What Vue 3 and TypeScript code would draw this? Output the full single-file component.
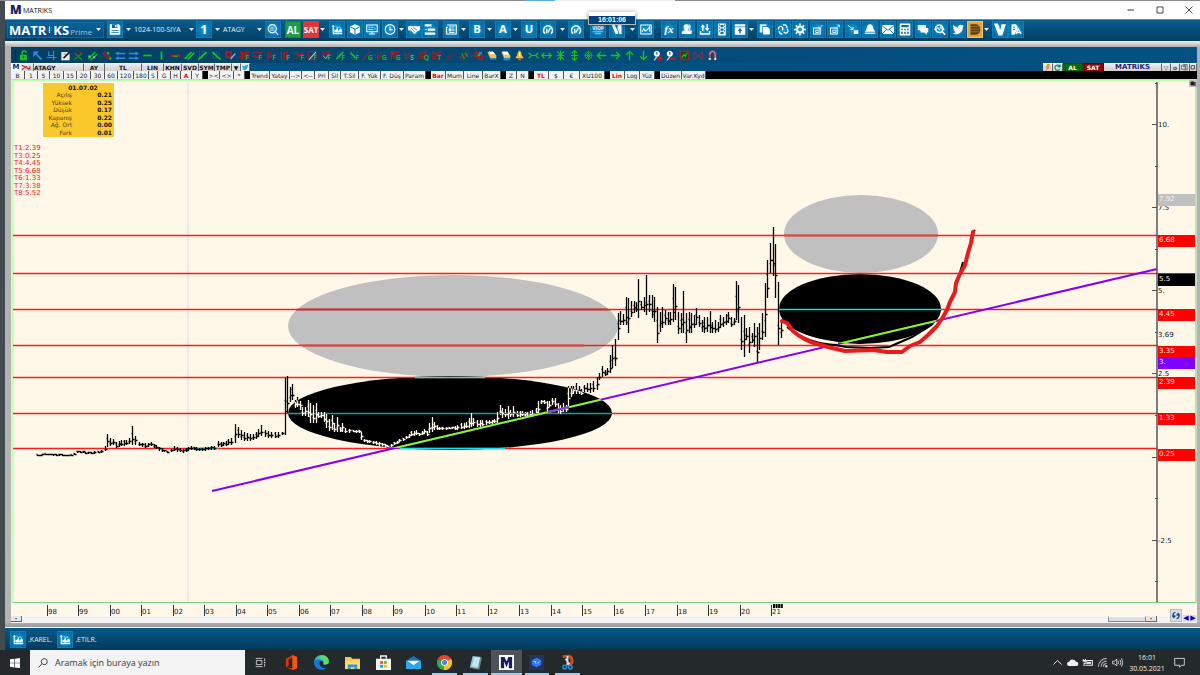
<script setup lang="ts">
import { h } from 'vue'

interface Shape {
  d?: string
  t?: string
  x?: number
  y?: number
  size?: number
  f?: string
  s?: string
  w?: number
}

const fill = (d: string, f = '#fff'): Shape => ({ d, f })
const line = (d: string, s = '#fff', w = 1.4): Shape => ({ d, s, w })
const word = (t: string, x: number, y: number, size: number, f = '#fff'): Shape => ({ t, x, y, size, f })

const Glyph = (props: { shapes: Shape[] }) =>
  h(
    'svg',
    { viewBox: '0 0 16 16', class: 'glyph', 'aria-hidden': 'true' },
    props.shapes.map((p) =>
      p.t
        ? h('text', { x: p.x, y: p.y, 'font-size': p.size, fill: p.f, 'text-anchor': 'middle', 'font-weight': 700 }, p.t)
        : h('path', { d: p.d, fill: p.f ?? 'none', stroke: p.s ?? 'none', 'stroke-width': p.w ?? 0 }),
    ),
  )
Glyph.props = ['shapes']

const bird = 'M1 12.5c2 .2 3.4-.3 4.5-1.2-1.500-.1-2.500-1-2.900-2.200h1.300C2.300 8.600 1.500 7.300 1.500 5.800l1.400.4C1.500 5 1.200 3.500 2 2c1.700 2 3.800 3.200 6.200 3.300C7.800 3.200 9.300 1.500 11.200 1.500c1 0 1.800.4 2.400 1l2-.8-1.300 1.900 1.600-.4-1.500 1.600C14.500 10 11 14.200 6.200 14.200c-2 0-3.800-.7-5.200-1.700z'
const chartIcon = [
  line('M3 2v11.500h12', '#fff', 1.5),
  fill('M4.500 12V8l2 1 2-4 1.500 5 2-3 2.500 1v4z'),
  line('M1 4h4M6 3l3 3 2-2 3 4', '#bfe6fb', 1),
]
const gauge = [line('M4 13.500A6 6 0 1 1 12 13.500', '#fff', 2), line('M6 13q1-3 0-6M8 12l3-6', '#fff', 1.800)]
const V: Record<string, Shape[]> = {
  save: [fill('M1 1h12l2 2v12H1z'), fill('M4 1h7v5H4z', '#0a6aa5'), fill('M8 2h2v3H8z'), fill('M3 9h10v1H3zM3 11.500h10v1H3z', '#0a6aa5')],
  one: [word('1', 8, 14, 17)],
  find: [line('M7 1.500a5.500 5.500 0 1 0 .1 0M11 11l4 4'), line('M4 5h6M4 7h6M4 9h6', '#cfeafa', 1)],
  chart: chartIcon,
  cube: [fill('M8 1l6.500 3v8L8 15l-6.500-3V4z'), line('M2 4.500l6 3 6-3M8 8v7', '#0c78b6', 1.400)],
  screen: [line('M1 2h14v9H1zM4 14h8M8 11v3'), line('M3 5h3M7 5h3M3 8h6M11 7h2', '#cfeafa', 1.200)],
  clock: [line('M8 1.500a6.500 6.500 0 1 0 .1 0M8 4v4.500h3.500', '#fff', 1.600)],
  hands: [fill('M0 4l3-1 4 1 2-1 4 1 3-1v6l-3 1-4 4-2-1-5-4H0z'), line('M4 6l5 5M7 5l5 4M3 9l4 4', '#0c78b6', 1)],
  rows: [fill('M1 1h9v3H1zM5 6.500h10v3H5zM1 12h14v3H1z'), fill('M1 7.500h3v1H1z')],
  news: [line('M3 2h12v12H2V5h2', '#fff', 1.600), line('M5.500 4.500h7M5.500 12h7M9.500 7.500h3M9.500 9.500h3', '#fff', 1.200), fill('M5 6.500h3.500v4H5z')],
  b: [word('B', 8, 13, 15)],
  a: [word('A', 8, 13, 15)],
  u: [word('U', 8, 13, 15)],
  gauge,
  viop: [word('VIOP', 8, 8, 6.500), line('M1 11h14M4 13.500h8', '#a8dcf6', 1)],
  vm: [fill('M1 2h4l4 9V2h5v12h-3V6l-2 8H6z')],
  frame: [line('M1 2h14v12H1z'), line('M3 11l2-4 2 3 3-2 3-4v7', '#fff', 1.400)],
  fx: [word('fx', 8, 12, 15)],
  people: [fill('M7 1a3.500 3.500 0 0 1 3 5.500l-1 2 5 2.500v3H1v-3l4-2.500-1-2A3.500 3.500 0 0 1 7 1z'), fill('M10 1c3 0 4 3 2.500 5.500l-.5 1.500 3 2V12l-5-3.500z', '#bfe3f5')],
  lift: [fill('M5 1l3 4H6v5H4V5H2zM11 10L8 6h2V1h2v5h2zM1 10h2v3h10v-3h2v5H1z')],
  film: [fill('M3 0h10v16H3z'), fill('M6 2h4v3H6zM6 6.500h4v3H6zM6 11h4v3H6zM4 1h1v2H4zM4 5h1v2H4zM4 9h1v2H4zM11 1h1v2h-1zM11 5h1v2h-1zM11 9h1v2h-1z', '#0b6ca8')],
  upload: [fill('M1 1h14v3H1zM1 5h14v10H1z'), fill('M8 6l3 3.500H9V13H7V9.500H5z', '#0b6ca8')],
  copy: [fill('M1 1h9v11H1z', '#d8effb'), line('M5 4h7l3 3v8H5z', '#0b6ca8', 1), fill('M5.500 4.500h6l3 3v7h-9z')],
  coins: [line('M2 8a3 3 0 1 1 5 1M13 7a3 3 0 1 1-4 4M8 2q6-1 5 4M3 10q0 4 4 4', '#fff', 1.700)],
  gear: [line('M8 4a4 4 0 1 0 .1 0', '#fff', 3), line('M8 0v3M8 13v3M0 8h3M13 8h3M2.500 2.500l2 2M11.500 11.500l2 2M2.500 13.500l2-2M11.500 4.500l2-2', '#fff', 2)],
  shrink: [line('M2 6h9v8H2z', '#fff', 1.400), line('M5 9h4v3H5zM14 2l-5 5M9 4v3h3', '#d8effb', 1.300)],
  grow: [line('M2 6h9v8H2z', '#fff', 1.400), line('M5 9h4v3H5zM9 7l5-5M11 2h3v3', '#d8effb', 1.300)],
  corner: [line('M1 2l7 6M8 4.500V8H4.500', '#d8effb', 1.300), fill('M9 9h6v5H9z')],
  bell: [fill('M7 1h2c3 1 3 5 4 7l2 3H1l2-3c1-2 1-6 4-7z'), fill('M1 12h14v2H1z', '#cfe8f5')],
  mail: [fill('M0 2h16v12H0z'), line('M0 3l8 6 8-6M0 14l6-6M16 14l-6-6', '#0c6aa6', 1.200)],
  calc: [fill('M1 0h14v16H1z'), fill('M3 2h10v3H3zM3 7h2v2H3zM7 7h2v2H7zM11 7h2v2h-2zM3 11h2v3H3zM7 11h2v3H7zM11 11h2v3h-2z', '#0b6ca8')],
  chat: [fill('M1 2h11v7H7l-3 2V9H1z', '#e2f3fc'), fill('M5 6h10v6h-2v3l-3-3H5z')],
  loupe: [line('M7 2a5 5 0 1 0 .1 0M11 11l4 4', '#fff', 2), line('M0 8h3l2-3 2 4 2-5 2 4h3', '#fff', 1.200)],
  bird: [fill(bird)],
  d: [fill('M2 1h7c8 0 8 14 0 14H2z', '#5c3d14'), line('M2 4h11M2 7.500h13M2 11h12', '#c8923a', .8)],
  v: [fill('M0 0h5l2 4 1 6 2-9h6l-5 15H6z')],
  doc: [fill('M2 1h6l2 3v3L6 15H2z'), line('M4 5h3M4 8h3', '#0b6ca8', 1.200), line('M8 14l3-7 4 7M9 12h5', '#fff', 1.800)],
}

interface Cluster { w: number; icons: string[]; caret?: boolean }
const clusters: Cluster[] = [
  { w: 70, icons: ['chart', 'cube', 'screen', 'clock'] },
  { w: 7, icons: [], caret: true },
  { w: 37, icons: ['hands', 'rows'] },
  { w: 26, icons: ['news'], caret: true },
  { w: 26, icons: ['b'], caret: true },
  { w: 26, icons: ['a'], caret: true },
  { w: 19, icons: ['u'] },
  { w: 28, icons: ['gauge'], caret: true },
  { w: 22, icons: ['gauge'] },
  { w: 19, icons: ['viop'] },
  { w: 29, icons: ['vm'], caret: true },
  { w: 23, icons: ['frame'] },
  { w: 71, icons: ['fx', 'people', 'lift', 'film'] },
  { w: 25, icons: ['upload'], caret: true },
  { w: 210, icons: ['copy', 'coins', 'gear', 'shrink', 'grow', 'corner', 'bell', 'mail', 'calc', 'chat', 'loupe', 'bird'] },
  { w: 25, icons: ['d'], caret: true },
  { w: 35, icons: ['v', 'doc'] },
]

const G = '#12c812'
const R = '#b01c20'
const B = '#2a8cf0'
const tag = (t: string): Shape => word(t, 12, 15, 10, '#14b414')
const hatch = line('M3 3h1M7 3h1M11 3h1M3 7h1M7 7h1M11 7h1M3 11h1M7 11h1M11 11h1', '#2f8bd8', 1.500)
const drawTools: Shape[][] = [
  [fill('M3 7h10v8H3z', G), line('M6 7V4q0-2.500 3-2.500t3 2.500', G, 2), fill('M7 9h2v3H7z', '#064')],
  [line('M14 14L4 4', B, 2.500), fill('M2 2h8L2 10z', B)],
  [line('M1 11h14M11 1v14M4 2v6h7', B, 1.600)],
  [fill('M2 3h12v12H2z', '#eee'), line('M5 12l9-9', '#111', 2.500), line('M5 6h4', '#555', 1)],
  [line('M2 14L13 5M3 5l10 9', '#158a25', 2), line('M2 4l4 2M10 2l3 4', R, 2)],
  [line('M2 13L12 3M5 15L15 6', G, 2), fill('M2 8h3v3H2zM9 9h3v3H9z', '#7ac77a')],
  [line('M2 4l10 10M5 2l10 10', R, 2), fill('M9 3h3v3H9zM12 11h3v3h-3z', G)],
  [line('M3 5h12M3 12h12', B, 2), fill('M0 5l5-3v6zM0 12l5-3v6z', B)],
  [line('M1 5h12M1 12h12', B, 2), fill('M16 5l-5-3v6zM16 12l-5-3v6z', B)],
  [line('M2 8h12', G, 2.500)],
  [line('M8 2v12', G, 2.500)],
  [line('M2 9h12', G, 2), fill('M1 6h4v4H1zM11 6h4v4h-4z', R)],
  [line('M1 13L11 3M5 14L15 4', G, 2.400)],
  [hatch, line('M2 14L14 3', G, 2.500)],
  [hatch, line('M2 3l12 11', G, 2.500)],
  [line('M2 3h7v7H2z', R, 2.500), line('M8 13l7-8', '#8fb6d8', 2)],
  [line('M1 3h14M1 6h14M1 9h14M1 12h7M5 2v12M10 2v6', R), tag('F')],
  [line('M1 4h14M3 7l5 5 6-9M1 10h7', R), tag('F')],
  [line('M2 14L4 2M2 14L9 3M2 14L14 4', R), tag('F')],
  [line('M2 2v12M6 2v12M10 2v12', R, 1.800), tag('F')],
  [line('M1 5l13 2M2 13L14 3M4 3l5 8', R), tag('F')],
  [line('M2 2h11v12H2z', R), line('M3 14L13 3', '#c8c8c8', 1.600), tag('F')],
  [line('M1 3h14M1 6h14', R), line('M3 8l4 5 4-7', '#9aa7ae', 1.400), tag('F')],
  [hatch, line('M2 13L12 3', G, 2.400), tag('F')],
  [hatch, line('M2 4l8 8', G, 2.400), tag('F')],
  [line('M1 14L12 2', R, 1.600), tag('G')],
  [line('M2 14V3M2 14L8 3M2 14L14 4', R), tag('G')],
  [line('M2 2v12M2 3h12M2 3l10 6M2 3l6 10', R, 1.800), tag('G')],
  [line('M2 14V3M2 14L8 3M2 14L14 4', R), { ...tag('S'), f: '#1ee01e' }],
  [line('M1 3h13M1 6h13M1 9h8M1 12h8', R), tag('Q')],
  [line('M1 3h14M1 6h14M1 9h8M1 12h8', R), tag('T')],
  [line('M1 13L9 5M4 14L12 4M8 14l7-8', '#8a2230', 1.200)],
  [line('M1 12l8-8M5 14L15 4', R, 1.800), line('M4 5l4 8M9 4l4 6', G, 1.400)],
  [line('M3 4h5v5H3zM8 8h6v5H8z', R, 2), line('M10 3v4M12 3v3', '#38a0e8', 1.500), fill('M7 6h3v3H7z', G)],
  [fill('M2 3h9l4 5v4H6z', '#e7c34a'), fill('M4 2h6l3 4H6z', '#fff'), fill('M6 12h9v2H6z', '#2e8ae0')],
  [fill('M2 3h9l4 5v4H6z', '#e7c34a'), fill('M3 2h8l2 5H6z', '#fff'), fill('M5 12h10v3H5z', '#2e8ae0')],
  [fill('M8 1q3 1 3 6l3 5H2l3-5q0-5 3-6z', '#f2c437'), fill('M6 12h4v3H6z', '#c46c1a'), line('M8 4v5', '#fff')],
  [line('M1 4l4 4-4 4M15 4l-4 4 4 4M4 8h8', G, 1.700)],
  [line('M5 4L1 8l4 4M11 4l4 4-4 4M2 8h12', G, 1.700)],
  [line('M3 2l5 5 5-5M3 14l5-5 5 5M8 1v14M3 8h10', G, 1.700)],
  [line('M4 5l4-4 4 4M4 11l4 4 4-4M8 2v12M3 8h10', G, 1.700)],
  [line('M8 3a5 5 0 1 0 .1 0M8 1v14M2 8h12M4 4l8 8M4 12l8-8', '#16a82a', 1.400)],
  [line('M15 8H2M7 3L2 8l5 5', G, 1.900)],
  [line('M1 8h13M9 3l5 5-5 5', G, 1.900)],
  [line('M8 15V2M3 7l5-5 5 5', G, 1.900)],
  [line('M8 1v13M3 9l5 5 5-5', G, 1.900)],
  [fill('M7 1a4.500 4.500 0 1 0 .1 0', '#fff'), line('M7 3v4', '#248', 1.500), line('M7 10l-4 5', '#ccc', 2), line('M8 12h7M11.500 8.500v7', '#e01616', 2)],
  [fill('M7 1a4.500 4.500 0 1 0 .1 0', '#fff'), line('M7 3v4', '#248', 1.500), line('M7 10l-4 5', '#ccc', 2), line('M8 13h7', '#e01616', 2)],
  [fill('M1 1h14v14H1z', '#b01c20'), fill('M3 3h10v10H3z', '#0a4a2a'), line('M4 11l3-4 2 2 3-5', G, 1.800)],
  [line('M1 14V3l7 6 6-7v12L8 8z', '#b8252c', 1.300)],
  [line('M4 12V7q0-5 4-5t4 5v5', '#b5383e', 3.200), line('M4 7q0-5 4-5t4 5v5', '#d8c4c8', 1), line('M2.500 13h3M10.500 13h3', '#e4e4e4', 3)],
]

const heads = [
  { t: 'ATAGY', w: 50, left: true }, { t: 'AY', w: 21 }, { t: 'TL', w: 37 }, { t: 'LIN', w: 22 },
  { t: 'KHN', w: 18 }, { t: 'SVD', w: 17 }, { t: 'SYM', w: 16 }, { t: 'TMP', w: 17 }, { t: '▼', w: 9 },
]

type Cell = [string, number, boolean?]
const periods: Cell[][] = [
  [['B', 14], ['1', 13], ['5', 12], ['10', 14], ['15', 13], ['20', 14], ['30', 14], ['60', 13], ['120', 16], ['180', 15], ['S', 9], ['G', 13], ['H', 10], ['A', 11, true], ['Y', 11]],
  [['><', 12], ['<>', 14], ['*', 11]],
  [['Trend', 20], ['Yatay', 20], ['-->', 12], ['<--', 13], ['Prl', 14], ['Sil', 12], ['T.Sil', 18], ['F. Yük', 22], ['F. Düş', 23], ['Param', 22]],
  [['Bar', 15, true], ['Mum', 18], ['Line', 19], ['BarX', 18]],
  [['Z', 11], ['N', 12]],
  [['TL', 15, true], ['$', 15], ['€', 16], ['XU100', 25]],
  [['Lin', 15, true], ['Log', 15], ['Yüz', 15]],
  [['Düzen', 22], ['Var.Kyd', 24]],
]

const quote = [
  ['Açılış', '0.21'], ['Yüksek', '0.25'], ['Düşük', '0.17'], ['Kapanış', '0.22'], ['Ağ. Ort', '0.00'], ['Fark', '0.01'],
]
const trends = ['T1:2.39', 'T3:0.25', 'T4:4.45', 'T5:6.68', 'T6:1.33', 'T7:3.38', 'T8:5.52']

const levels = [235, 273, 309, 345, 377, 413, 448]
const scale = [
  { y: 124, t: '10.' }, { y: 207, t: '7.5' }, { y: 290, t: '5.' }, { y: 373, t: '2.5' }, { y: 457, t: '' }, { y: 540, t: '-2.5' },
]
const halves = [83, 166, 249, 332, 415, 498, 581]
const tags = [
  { y: 194, t: '7.92', c: '#c0c0c0' }, { y: 235, t: '6.68', c: '#f00' }, { y: 274, t: '5.5', c: '#000' },
  { y: 309, t: '4.45', c: '#f00' }, { y: 346, t: '3.35', c: '#f00' }, { y: 357, t: '3.', c: '#8000ff' },
  { y: 377, t: '2.39', c: '#f00' }, { y: 413, t: '1.33', c: '#f00' }, { y: 449, t: '0.25', c: '#f00' },
]
const years = Array.from({ length: 24 }, (_, i) => ({
  x: Math.round(47 + (i * 724) / 23),
  t: String((98 + i) % 100).padStart(2, '0'),
}))

// [x, high, low] of the recorded months; months in between are interpolated
const recorded: number[][] = [
  [38, 455, 456], [46, 454, 455], [60, 454, 456], [72, 455, 456], [78, 451, 453], [92, 452, 454], [102, 450, 453], [106, 446, 451],
  [108, 434, 447], [111, 438, 446], [114, 439, 445], [117, 442, 448], [122, 440, 446], [127, 440, 445], [130, 438, 444], [133, 426, 445],
  [136, 436, 445], [140, 442, 446], [146, 443, 448], [152, 442, 446], [160, 447, 451], [168, 451, 453], [175, 446, 451], [184, 449, 453], [192, 446, 450],
  [200, 448, 451], [215, 446, 450], [219, 441, 447], [224, 442, 446], [232, 438, 445], [236, 424, 443], [239, 427, 438], [242, 430, 440], [248, 433, 441], [254, 434, 440],
  [259, 429, 437], [262, 425, 436], [266, 430, 437], [272, 432, 438], [279, 432, 438], [283, 432, 435], [286, 378, 435],
  [288, 376, 413], [291, 387, 402], [293, 384, 400], [296, 400, 408], [298, 397, 407], [301, 401, 410], [303, 407, 416], [306, 407, 416],
  [309, 400, 417], [311, 403, 423], [314, 405, 423], [317, 403, 423], [319, 412, 418], [322, 412, 418], [325, 412, 422], [327, 414, 428],
  [330, 419, 431], [333, 415, 430], [335, 423, 432], [338, 417, 432], [341, 427, 432], [343, 423, 432], [346, 428, 433], [350, 429, 433], [354, 430, 432], [360, 430, 433],
  [362, 432, 440], [365, 439, 442], [370, 440, 443], [377, 441, 445], [383, 443, 446], [388, 445, 448], [395, 442, 445], [400, 439, 442], [407, 436, 439],
  [412, 431, 436], [417, 430, 435], [420, 433, 436], [425, 429, 434], [428, 431, 436], [430, 423, 433], [433, 417, 432], [435, 422, 430], [440, 427, 430],
  [453, 427, 429], [458, 425, 430], [462, 423, 429], [467, 422, 428], [472, 413, 427], [474, 418, 426], [478, 420, 427], [483, 420, 426], [490, 420, 424], [495, 419, 423],
  [498, 412, 423], [501, 405, 415], [503, 408, 418], [506, 409, 417], [509, 406, 419], [511, 410, 417], [514, 406, 417], [518, 411, 417], [523, 411, 416],
  [528, 412, 417], [533, 410, 417], [537, 408, 416], [539, 401, 413], [542, 400, 404], [545, 400, 404], [548, 401, 412], [550, 401, 407], [553, 398, 405],
  [556, 398, 407], [559, 403, 413], [561, 405, 414], [564, 403, 412], [567, 405, 412], [569, 386, 407], [572, 386, 397], [574, 386, 394], [577, 383, 394],
  [580, 386, 394], [582, 389, 395], [585, 385, 392], [588, 383, 392], [591, 383, 393], [594, 381, 392], [598, 377, 390], [600, 373, 380], [603, 366, 377],
  [606, 370, 376], [608, 368, 375], [611, 355, 373], [613, 345, 368], [616, 339, 366], [619, 313, 340], [621, 311, 325], [624, 314, 325], [627, 297, 325],
  [629, 298, 333], [632, 301, 317], [635, 301, 313], [637, 302, 312], [639, 279, 318], [642, 301, 310], [645, 297, 312], [647, 275, 315], [650, 295, 312],
  [653, 295, 318], [655, 297, 322], [658, 307, 343], [661, 312, 332], [663, 307, 328], [666, 310, 325], [669, 312, 325], [671, 312, 325], [674, 284, 322],
  [676, 287, 320], [679, 312, 334], [682, 313, 333], [684, 291, 333], [687, 313, 343], [690, 312, 333], [692, 313, 333], [695, 315, 328], [697, 308, 325],
  [700, 315, 327], [703, 320, 332], [705, 317, 333], [708, 317, 332], [711, 311, 333], [713, 322, 333], [716, 320, 333], [719, 322, 332], [721, 315, 328],
  [724, 317, 327], [727, 314, 325], [729, 312, 323], [732, 317, 327], [735, 318, 325], [737, 281, 320], [739, 285, 323], [742, 317, 350], [745, 315, 357],
  [747, 328, 340], [750, 327, 353], [753, 333, 343], [755, 323, 347], [758, 327, 362], [760, 323, 350], [763, 313, 340], [766, 283, 337], [768, 260, 298],
  [771, 243, 273], [774, 227, 276], [776, 244, 298], [779, 282, 345], [782, 320, 338],
]
const months: number[][] = []
recorded.forEach((bar, i) => {
  months.push(bar)
  const next = recorded[i + 1]
  if (!next) return
  const gaps = Math.round((next[0] - bar[0]) / 3)
  for (let k = 1; k < gaps; k++) {
    const at = (n: number) => bar[n] + ((next[n] - bar[n]) * k) / gaps
    months.push([Math.round(at(0)), Math.round(at(1)), Math.round(at(2))])
  }
})
const priceBars = months
  .map(([month, hi, lo], i) => {
    const x = month - 0.5
    const span = lo - hi
    const open = hi + Math.round(span * (i % 3 === 0 ? 0.4 : 0.7)) - 0.5
    const close = hi + Math.round(span * (i % 2 === 0 ? 0.6 : 0.75)) - 0.5
    return `M${x} ${hi}V${lo}M${x - 1} ${open}h1M${x} ${close}h2`
  })
  .join('')

const apps: { n: string; s: Shape[]; state?: string }[] = [
  { n: 'Görev Görünümü', s: [line('M2 5h8v6H2z', '#ddd', 1.200), line('M1 2h10M1 14h10M14 2v4M14 10v4', '#ddd', 1.200), fill('M13 7h2v2h-2z', '#ddd')] },
  { n: 'Office', s: [fill('M2 4l7-4 5 2v12l-5 2-7-3 7 1V3L5 4.500v7L2 13z', '#d8320e'), fill('M9 0l5 2v12l-5 2z', '#f0551d')] },
  { n: 'Edge', s: [fill('M8 0a8 8 0 0 1 8 7c0 3-3 4-6 3 1-2 0-4-3-4C3 6 1 8 0 9 0 4 3 0 8 0z', '#35c1b0'), fill('M0 8c0-3 5-5 8-2-4 1-3 8 5 8-5 4-13 1-13-6z', '#1478d4'), fill('M9 0c6 1 8 6 6 9-2 1-4 1-5 .500 1-3 0-6-5-6z', '#5fd86a')] },
  { n: 'Dosya Gezgini', s: [fill('M0 2h6l2 2h8v11H0z', '#f6c64c'), fill('M0 6h16v9H0z', '#ffd970'), fill('M3 10h10v5h-3v-2H6v2H3z', '#3b93d8')] },
  { n: 'Store', s: [fill('M0 4h16v12H0z', '#f4f4f4'), line('M5 4V1h6v3', '#f4f4f4', 1.500), fill('M4.500 6.500h3v3h-3z', '#f25022'), fill('M8.500 6.500h3v3h-3z', '#7fba00'), fill('M4.500 10.500h3v3h-3z', '#00a4ef'), fill('M8.500 10.500h3v3h-3z', '#ffb900')] },
  { n: 'Posta', s: [fill('M0 6l8-5 8 5v9H0z', '#1473c4'), fill('M1 6h14l-7 5z', '#fff'), fill('M0 6l8 5 8-5v9H0z', '#29a8ea')] },
  { n: 'Chrome', state: 'open', s: [fill('M8 8L1 4a8 8 0 0 1 14 0z', '#e84335'), fill('M8 8L1 4a8 8 0 0 0 6 12z', '#34a853'), fill('M8 8l7-4a8 8 0 0 1-8 12z', '#fbc116'), fill('M8 4.200a3.800 3.800 0 1 0 .1 0', '#fff'), fill('M8 5.200a2.800 2.800 0 1 0 .1 0', '#4285f4')] },
  { n: 'Not Defteri', state: 'open', s: [fill('M5 1l9 1-3 13-9-2z', '#8fc6d6'), fill('M7 2l6 1-3 10-6-1z', '#c4e6ee'), fill('M13 2l2 1-3 13-1-1z', '#5c8792'), line('M2 13l9 2', '#7a8c90', 1.200)] },
  { n: 'Matriks', state: 'open active', s: [fill('M0 0h16v16H0z', '#fff'), fill('M2 2h4l2 5 2-5h4v12h-3.500V7L8 13 5.500 7v7H2z', '#1b1c5c')] },
  { n: 'Sanal Makine', state: 'open', s: [fill('M0 0h16v16H0z', '#26345c'), fill('M8 3l5 2.500v5L8 13l-5-2.500v-5z', '#2e7cf0'), line('M5 7h2v2M9 9l2-2', '#cfe0ff', 1)] },
  { n: 'Ekran Alıntısı', state: 'open', s: [line('M3 2q9-3 10 4 0 4-4 4', '#d84a20', 3), line('M8 1v10M6 4l4 6', '#d8dde0', 2), line('M5 11a2 2 0 1 0 .1 0M11 11a2 2 0 1 0 .1 0', '#2a96e0', 1.500)] },
]
const tray = [
  { n: 'Gizli simgeler', s: [line('M2 11l6-6 6 6', '#eee', 1.400)] },
  { n: 'OneDrive', s: [fill('M3 13a3 3 0 0 1 0-6q2-4 6-3 3 0 4 3a3 3 0 0 1 1 6z', '#f0f0f0')] },
  { n: 'Pil', s: [line('M3 5h12v7H5M2 3v3M5 3v3M1 6h5v3H3v4', '#eee', 1.500), fill('M7 7h6v3H7z', '#eee')] },
  { n: 'Ağ', s: [line('M2 14A12 12 0 0 1 14 2M6 14A8 8 0 0 1 14 6M9.500 14A4.500 4.500 0 0 1 14 9.500', '#bbb', 1.500), fill('M12 12h3v3h-3z', '#eee')] },
  { n: 'Ses', s: [line('M1 6h3l3-3v10l-3-3H1zM9 6q1 2 0 4M11.500 4q2.500 4 0 8M14 2q3 6 0 12', '#eee', 1.200)] },
]
</script>

<template>
  <div class="desktop">
    <div class="edge"><i class="edge-blue"></i><i class="edge-pale"></i></div>
    <div class="window">
      <header class="titlebar">
        <span class="mlogo">M</span>
        <span class="title">MATRIKS</span>
        <div class="winbtns">
          <button aria-label="Küçült"><Glyph :shapes="[line('M1 8h13', '#222', 1.8)]" /></button>
          <button aria-label="Büyüt"><Glyph :shapes="[line('M2 2h12v12H2z', '#222', 1.6)]" /></button>
          <button aria-label="Kapat"><Glyph :shapes="[line('M1 1l14 14M15 1L1 15', '#222', 1.6)]" /></button>
        </div>
      </header>

      <nav class="mainbar">
        <button class="brand">
          <span>MATR</span>
          <i class="dots"><Glyph :shapes="[line('M8 0v3M8 4v3M8 8v3M8 12v3', '#fff', 2.6), line('M4 6h2M4 10h2M11 3h2M11 9h2', '#bfe0f0', 1.4)]" /></i>
          <span>KS</span><small>Prime</small><b class="caret"></b>
        </button>
        <button class="tool" aria-label="Kaydet"><Glyph :shapes="V.save" /></button>
        <b class="caret slot"></b>
        <label class="pick wide"><select aria-label="Sayfa"><option>1024-100-SIYA</option></select><b class="caret"></b></label>
        <button class="tool" aria-label="Sayfa 1"><Glyph :shapes="V.one" /></button>
        <b class="caret slot"></b>
        <label class="pick"><select aria-label="Sembol"><option>ATAGY</option></select><b class="caret"></b></label>
        <button class="tool" aria-label="Bul"><Glyph :shapes="V.find" /></button>
        <button class="tool buy">AL</button>
        <button class="tool sell">SAT</button>
        <b class="caret slot small"></b>
        <div v-for="(c, i) in clusters" :key="i" class="cluster" :style="{ width: c.w + 'px' }">
          <span v-for="n in c.icons" :key="n" class="cell">
            <button class="tool" :class="{ gold: n === 'd', serif: n === 'fx' }" :aria-label="n"><Glyph :shapes="V[n]" /></button>
          </span>
          <b v-if="c.caret" class="caret"></b>
        </div>
        <div class="timebox"><span>16:01:06</span></div>
      </nav>

      <main class="pane">
        <div class="drawbar">
          <span class="grip"></span>
          <div class="drawtools">
            <button v-for="(s, i) in drawTools" :key="i" :aria-label="'Çizim aracı ' + (i + 1)"><Glyph :shapes="s" /></button>
          </div>
        </div>

        <div class="heads">
          <span class="head logo">M</span>
          <span class="head mark"><Glyph :shapes="[line('M-4 3l10 5 10 4M-4 13L8 5', '#c22', 2.4), line('M9 11a4 4 0 1 0 4-7', '#226', 2)]" /></span>
          <button v-for="x in heads" :key="x.t" class="head" :class="{ left: x.left }" :style="{ width: x.w + 'px' }">{{ x.t }}</button>
          <button class="head tweet" aria-label="Twitter"><Glyph :shapes="[fill(bird, '#2aa9e0')]" /></button>
          <div class="headright">
            <button class="head ten" aria-label="Hızlı emir"><Glyph :shapes="[fill('M8 0h6l-3 6h4L4 16l3-8H3z', '#f08a10')]" /></button>
            <button class="head ten" aria-label="Yenile"><Glyph :shapes="[line('M13 5a6 6 0 1 0 0 7M14 1v5H8', '#0a8a6a', 2.6)]" /></button>
            <button class="head al">AL</button>
            <button class="head sat">SAT</button>
            <span class="head mx">MATRiKS</span>
            <button class="head nine">▽</button>
            <button class="head nine">o</button>
            <button class="head ten" aria-label="Pencereler"><Glyph :shapes="[line('M1 3h9v9H1zM5 1h9v12H8M4 6h7', '#444', 1.6)]" /></button>
            <button class="head seven" aria-label="Büyüt"><Glyph :shapes="[line('M3 3h9v9H3z', '#444', 2.5)]" /></button>
          </div>
        </div>

        <div class="periods">
          <div v-for="(g, i) in periods" :key="i" class="pgroup">
            <button v-for="c in g" :key="c[0]" :class="{ on: c[2] }" :style="{ width: c[1] + 'px' }">{{ c[0] }}</button>
          </div>
        </div>

        <section class="chart">
          <svg class="plot" viewBox="11 79 1186 537" role="img" aria-label="ATAGY aylık grafik">
            <defs>
              <clipPath id="dark">
                <ellipse cx="450" cy="413" rx="162" ry="37" />
                <ellipse cx="860" cy="309" rx="81" ry="35" />
              </clipPath>
              <clipPath id="pale">
                <ellipse cx="453" cy="326" rx="165" ry="51" />
                <ellipse cx="861" cy="234" rx="77" ry="39" />
              </clipPath>
            </defs>
            <rect x="11" y="79" width="1186" height="537" fill="#fff7e8" />
            <rect x="11" y="79" width="1186" height="1" fill="#c9c4c4" />
            <path d="M12.500 602V80.500H1196" fill="none" stroke="#c2fbb4" stroke-width="2" />
            <path d="M12 602.500H1196V80" fill="none" stroke="#7fcb83" stroke-width="1" />
            <path d="M188 82V602" stroke="#e9e6e6" stroke-width="1.500" />

            <g fill="#c0c0c0">
              <ellipse cx="453" cy="326" rx="165" ry="51" />
              <ellipse cx="861" cy="234" rx="77" ry="39" />
            </g>
            <g fill="#000">
              <ellipse cx="450" cy="413" rx="162" ry="37" />
              <ellipse cx="860" cy="309" rx="81" ry="35" />
            </g>

            <path v-for="y in levels" :key="y" :d="`M13 ${y + 0.5}H1158`" stroke="#fc1c1c" stroke-width="1.5" />
            <g clip-path="url(#pale)" stroke-width="2">
              <path d="M280 309.500H625" stroke="#b63c3c" />
              <path d="M280 345.500H584" stroke="#d04a46" />
              <path d="M780 235.500H940" stroke="#c4544a" />
            </g>
            <g clip-path="url(#dark)">
              <path d="M280 413.500H620M770 309.500H950" stroke="#000" stroke-width="3" />
              <path d="M280 413.500H620" stroke="#0ca4a4" stroke-width="1.500" />
              <path d="M770 309.500H950" stroke="#18e0e0" stroke-width="1.500" />
            </g>
            <path d="M415 377.500H485M400 448.500H505" stroke="#14e4e4" stroke-width="1.500" />
            <path d="M193 448.500H218" stroke="#14c4c4" stroke-width="1.500" />

            <path :d="priceBars" fill="none" stroke="#000" stroke-width="1.300" />
            <g clip-path="url(#dark)">
              <path :d="priceBars" fill="none" stroke="#fff7e8" stroke-width="1.300" />
            </g>
            <path d="M498 413.500H537" stroke="#f22" stroke-width="1" stroke-dasharray="4 2" />

            <path d="M212 491L1157 269" stroke="#8000ff" stroke-width="2" />
            <g clip-path="url(#dark)"><path d="M212 491L1157 269" stroke="#84ff14" stroke-width="2" /></g>
            <path d="M548 412L569 407" stroke="#8a3cf0" stroke-width="2" />

            <path d="M785 324Q800 338 838 343M889 345Q920 336 936 325" fill="none" stroke="#fff7e8" stroke-width="2" />
            <path d="M787 327Q806 343 835 345L846 347L870 348L889 347L912 337L933 324M957 283L963 262M973 232l2-2" fill="none" stroke="#000" stroke-width="2" />
            <path
              d="M782 321L787 323L793 331Q803 340 817 344T845 351L873 350L887 352H902L910 346L920 342L928 335L937 326L943 317L947 310L950 302L955 292L956 283L960 274L965 265L968 253L971 243L972 237L973 232"
              fill="none" stroke="#e81c1c" stroke-width="4" stroke-linecap="round" stroke-linejoin="round"
            />

            <path d="M1157 82V602" stroke="#555" stroke-width="1.500" />
            <path v-for="y in halves" :key="y" :d="`M1155 ${y + 0.5}h2`" stroke="#555" />
            <g v-for="s in scale" :key="s.y">
              <path :d="`M1152 ${s.y + 0.5}h5`" stroke="#555" />
              <text x="1158" :y="s.y + 3">{{ s.t }}</text>
            </g>
            <text x="1158" y="337">3.69</text>
            <g v-for="t in tags" :key="t.y">
              <rect x="1158" :y="t.y" width="37" height="12" :fill="t.c" />
              <text x="1159" :y="t.y + 7" class="tagtext">{{ t.t }}</text>
            </g>
            <path d="M1158 273.500H1195" stroke="#f00" stroke-width="1" />

            <path d="M11 604.500H1197" stroke="#f4f1ec" />
            <g v-for="y in years" :key="y.x">
              <path :d="`M${y.x + 0.5} 605V616`" stroke="#333" />
              <text :x="y.x + 1" y="614">{{ y.t }}</text>
            </g>
            <path d="M773 606H783" stroke="#000" stroke-width="4" stroke-dasharray="2 .6" />
            <rect x="1189" y="80" width="8" height="7" fill="#bbb" />
            <path d="M1191 82h3v3h-3zM1195 82v4" fill="#222" stroke="#222" />
          </svg>

          <table class="quote">
            <thead><tr><th colspan="2">01.07.02</th></tr></thead>
            <tbody><tr v-for="q in quote" :key="q[0]"><td>{{ q[0] }}</td><td>{{ q[1] }}</td></tr></tbody>
          </table>
          <ul class="trends"><li v-for="t in trends" :key="t">{{ t }}</li></ul>

          <div class="scroll">
            <button class="sbtn" aria-label="Sola kaydır">•</button>
            <span class="track"></span>
            <span class="thumb"></span>
            <button class="sbtn end" aria-label="Sağa kaydır">•</button>
            <div class="pager">
              <button class="refresh" aria-label="Güncelle"><Glyph :shapes="[line('M7 3Q2 4 4 10M2 8l2.500 3L7 8M9 13q5-1 3-7M9 8l2.500-3L14 8', '#14509c', 2.4)]" /></button>
              <button>◀</button>
              <button>▶</button>
            </div>
          </div>
        </section>
      </main>

      <footer class="minibar">
        <button class="mini"><span class="tool"><Glyph :shapes="V.chart" /></span>.KAREL.</button>
        <button class="mini"><span class="tool"><Glyph :shapes="V.chart" /></span>.ETILR.</button>
      </footer>
    </div>

    <div class="taskbar">
      <button class="start" aria-label="Başlat"><Glyph :shapes="[fill('M0 2l7-1v6.500H0zM8 1l8-1v7.500H8zM0 8.500h7V15l-7-1zM8 8.500h8V16l-8-1z')]" /></button>
      <label class="search">
        <Glyph :shapes="[line('M10 1a4.800 4.800 0 1 0 .1 0M6.500 9L1 15', '#222', 1.4)]" />
        <input type="text" placeholder="Aramak için buraya yazın" aria-label="Aramak için buraya yazın" />
      </label>
      <div class="apps">
        <button v-for="a in apps" :key="a.n" :class="a.state" :aria-label="a.n"><Glyph :shapes="a.s" /></button>
      </div>
      <div class="tray">
        <button v-for="t in tray" :key="t.n" :aria-label="t.n"><Glyph :shapes="t.s" /></button>
        <div class="clock"><span>16:01</span><span>30.05.2021</span></div>
        <button class="note" aria-label="Bildirimler"><Glyph :shapes="[line('M1 2h14v10h-4l-3 3v-3H1z', '#ddd', 1.3)]" /></button>
      </div>
    </div>
  </div>
</template>

<style>
html,
body {
  margin: 0;
  background: #262b2e;
}
</style>

<style scoped>
* {
  box-sizing: border-box;
}
.desktop {
  min-height: 100vh;
  display: flex;
  flex-direction: column;
  background: #424b50;
  font-family: 'Open Sans', 'Noto Sans', sans-serif;
  font-size: 7px;
  overflow: hidden;
}
button {
  border: 0;
  padding: 0;
  margin: 0;
  background: none;
  font: inherit;
  color: inherit;
  display: flex;
  align-items: center;
  justify-content: center;
}
.glyph {
  display: block;
  width: 100%;
  height: 100%;
  overflow: visible;
}
.edge {
  height: 1px;
  background: #8b8b8b;
  display: flex;
  padding-left: 525px;
}
.edge-blue {
  width: 30px;
  background: #5aa7ea;
}
.edge-pale {
  width: 120px;
  background: #eee;
}
.window {
  margin-left: 5px;
  display: flex;
  flex-direction: column;
}
.titlebar {
  height: 18px;
  background: #fff;
  display: flex;
  align-items: center;
  padding-left: 5px;
  color: #111;
}
.mlogo {
  font: 800 12px/18px 'Open Sans', sans-serif;
  color: #191a66;
  width: 13px;
}
.winbtns {
  margin-left: auto;
  display: flex;
  gap: 21px;
  padding-right: 7px;
}
.winbtns button {
  width: 8px;
  height: 8px;
}

.mainbar {
  position: relative;
  height: 22px;
  padding: 0 0 2px 2px;
  border-top: 1px solid #5a92b4;
  background: linear-gradient(#075d8e, #034a74 60%, #023e62);
  display: flex;
  align-items: center;
  color: #e6f1f8;
}
.brand {
  width: 97px;
  height: 16px;
  margin-right: 3px;
  padding: 0 2px 0 1px;
  justify-content: flex-start;
  background: linear-gradient(#0a6299, #044e7e);
  border: 1px solid #0b6ca2;
  font: 700 13px/14px 'Open Sans', sans-serif;
  color: #fff;
}
.brand small {
  font: 400 8px/8px 'Open Sans', sans-serif;
  color: #9cc7e0;
  align-self: flex-end;
  padding: 0 0 1px 1px;
}
.brand .caret {
  margin-left: auto;
}
.dots {
  flex: none;
  width: 7px;
  height: 10px;
}
.caret {
  flex: none;
  width: 5px;
  height: 3px;
  background: #dcecf5;
  clip-path: polygon(0 0, 100% 0, 50% 100%);
}
.caret.slot {
  margin: 0 3px;
}
.caret.small {
  margin: 0 4px 0 1px;
}
.tool {
  flex: none;
  width: 16px;
  height: 17px;
  padding: 1px;
  border: 1px solid #0d7fb6;
  background: radial-gradient(#0e9bdb, #0877b3 60%, #066298);
  color: #fff;
}
.pick {
  display: flex;
  align-items: center;
  width: 39px;
  margin-right: 3px;
}
.pick.wide {
  width: 60px;
  margin-right: 2px;
}
.pick select {
  appearance: none;
  flex: 1;
  min-width: 0;
  border: 0;
  padding: 0;
  background: none;
  color: #e6f1f8;
  font: 7px/16px 'Open Sans', sans-serif;
}
.buy,
.sell {
  font: 700 10px/14px 'Open Sans', sans-serif;
  background: #219a45;
  border-color: #1c853b;
  margin-left: 4px;
}
.sell {
  background: #e1343b;
  border-color: #e1343b;
  font-size: 8px;
  margin-left: 2px;
}
.cluster {
  flex: none;
  display: flex;
  align-items: center;
}
.cell {
  flex: 1 1 0;
}
.cluster .caret {
  margin: 0 3px 0 0;
}
.cluster .cell:first-child:nth-last-child(2) {
  flex: 0 0 16px;
  margin-right: auto;
}
.gold {
  background: #e2a43c;
  border-color: #f0c26a;
}
.serif {
  font-family: 'Liberation Serif', serif;
  font-style: italic;
}
.timebox {
  position: absolute;
  left: 583px;
  top: -8px;
  width: 48px;
  border: 1px solid #b8bcc0;
  border-top: 4px solid #fff;
  box-shadow: 0 0 4px rgba(0, 0, 0, 0.35);
  background: #02427a;
  color: #fff;
  font: 700 7px/8px 'Liberation Sans', sans-serif;
  text-align: center;
}

.pane {
  border: solid #b4b4b4;
  border-width: 6px 3px 4px 6px;
  border-image: linear-gradient(#f2f2f2, #b0b0b0 1%, #b4b4b4 99%, #9a9a9a) 6 3 4 6;
}
.drawbar {
  height: 16px;
  background: linear-gradient(90deg, #053f63, #034d7d 60%, #045283);
  display: flex;
  align-items: center;
}
.grip {
  width: 1px;
  height: 10px;
  margin: 0 1px 0 4px;
  border-left: 1px dotted #012;
}
.drawtools {
  display: grid;
  grid-template-columns: repeat(51, 1fr);
  width: 702px;
}
.drawtools button {
  height: 12px;
}
.drawtools .glyph {
  width: 11px;
  height: 11px;
}
.heads {
  height: 8px;
  background: #045080;
  display: flex;
  font: 700 6px/8px 'DejaVu Sans', sans-serif;
  color: #111;
}
.head {
  flex: none;
  height: 8px;
  border: solid #fafafa;
  border-width: 1px 1px 0 0;
  border-right-color: #666;
  background: linear-gradient(#ececec, #cfcfcf);
  line-height: 7px;
}
.head.left {
  justify-content: flex-start;
}
.head.logo {
  width: 10px;
  background: #fff;
  color: #191a66;
  font: 700 7px/8px 'DejaVu Sans', sans-serif;
  border: 0;
  text-align: center;
}
.head.mark {
  width: 13px;
}
.tweet {
  width: 9px;
  background: #e4f2f8;
}
.headright {
  margin-left: auto;
  display: flex;
}
.ten {
  width: 10px;
}
.nine {
  width: 9px;
  color: #555;
}
.seven {
  width: 7px;
}
.al,
.sat {
  width: 20px;
  color: #fff;
  background: #086a08;
  border-color: #0a4a0a;
}
.sat {
  width: 21px;
  background: #8a0808;
  border-color: #500;
}
.mx {
  width: 58px;
  font-size: 7px;
  text-align: center;
  color: #26266c;
}
.periods {
  height: 8px;
  background: #000;
  display: flex;
  gap: 5px;
  font: 6px/8px 'DejaVu Sans', sans-serif;
  color: #222;
}
.pgroup {
  display: flex;
}
.pgroup button {
  height: 8px;
  padding-top: 1px;
  background: #f3f3f3;
  border-right: 1px solid #555;
  white-space: nowrap;
  overflow: hidden;
}
.pgroup .on {
  color: #f00000;
  font-weight: 700;
}

.chart {
  position: relative;
  background: #f8f6f2;
}
.plot {
  display: block;
  width: 100%;
  height: auto;
  font: 7px 'DejaVu Sans', sans-serif;
  fill: #222;
}
.tagtext {
  fill: #ffe9dc;
}
.quote {
  position: absolute;
  left: 31px;
  top: 3px;
  width: 73px;
  height: 56px;
  border: 1px solid #fff;
  background: #fbc82c;
  border-collapse: separate;
  border-spacing: 0;
  padding: 1px 2px 1px 3px;
  font: 6px/7px 'DejaVu Sans', sans-serif;
  color: #54430f;
}
.quote td,
.quote th {
  padding: 0;
  text-align: right;
}
.quote th {
  text-align: center;
  padding-left: 8px;
  color: #111;
}
.quote td:first-child {
  width: 26px;
}
.quote td:last-child {
  font-weight: 700;
  color: #111;
}
.trends {
  position: absolute;
  left: 3px;
  top: 66px;
  height: 53px;
  margin: 0;
  padding: 0;
  list-style: none;
  display: grid;
  grid-auto-rows: 1fr;
  font: 7px/7px 'DejaVu Sans', sans-serif;
  color: #f02020;
}
.scroll {
  position: relative;
  height: 7px;
  display: flex;
  padding-right: 40px;
  background: #f5f4f2;
}
.track {
  flex: 1;
}
.sbtn {
  width: 11px;
  height: 6px;
  background: #e6e6e6;
  border: solid #666;
  border-width: 0 1px 1px 0;
  font-size: 5px;
}
.thumb {
  width: 38px;
  height: 6px;
  background: #dedede;
  border: 1px solid #888;
  border-top-color: #fff;
}
.pager {
  position: absolute;
  right: 1px;
  bottom: 1px;
  display: flex;
  align-items: flex-end;
  gap: 1px;
  color: #0000c8;
  font: 7px/7px 'DejaVu Sans', sans-serif;
}
.pager button {
  width: 6px;
  height: 7px;
  background: #dcdcdc;
}
.pager .refresh {
  width: 12px;
  height: 13px;
  border: 1px solid #bbb;
}

.minibar {
  height: 23px;
  border-top: 1px solid #f4f4f4;
  background: linear-gradient(#045a8a, #02395a);
  display: flex;
  align-items: center;
  gap: 5px;
  padding-left: 5px;
}
.mini {
  gap: 2px;
  color: #e4eef4;
}

.taskbar {
  flex: 1;
  min-height: 25px;
  background: #24292b;
  display: flex;
}
.start {
  width: 30px;
}
.start .glyph {
  width: 10px;
  height: 10px;
}
.search {
  width: 215px;
  background: #f3f3f3;
  display: flex;
  align-items: center;
  padding-left: 8px;
  gap: 7px;
}
.search .glyph {
  width: 10px;
  height: 10px;
  flex: none;
}
.search input {
  flex: 1;
  min-width: 0;
  border: 0;
  padding: 0;
  background: none;
  font: 9px/20px 'Open Sans', sans-serif;
}
.search input::placeholder {
  color: #3a3a3a;
  opacity: 1;
}
.apps {
  width: 338px;
  display: grid;
  grid-template-columns: repeat(11, 1fr);
}
.apps button {
  position: relative;
}
.apps .glyph {
  width: 15px;
  height: 15px;
}
.apps button:first-child .glyph {
  width: 11px;
  height: 11px;
}
.apps .active {
  background: #4c5457;
}
.apps .open::after {
  content: '';
  position: absolute;
  left: 3px;
  right: 3px;
  bottom: 0;
  height: 2px;
  background: #9bcdf0;
}
.apps .active::after {
  left: 0;
  right: 0;
}
.tray {
  margin-left: auto;
  display: flex;
  align-items: center;
  padding-right: 13px;
  color: #eee;
}
.tray button {
  width: 15px;
}
.tray .glyph {
  width: 11px;
  height: 11px;
}
.clock {
  width: 44px;
  display: flex;
  flex-direction: column;
  align-items: center;
  font-size: 7px;
  line-height: 11px;
}
.tray .note {
  margin-left: 3px;
}
</style>
